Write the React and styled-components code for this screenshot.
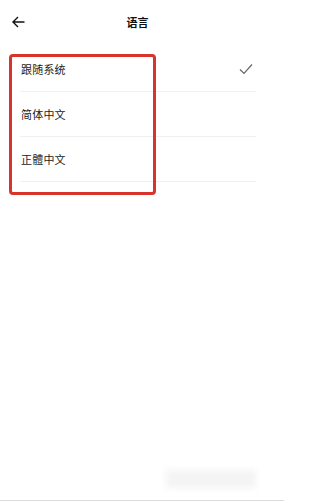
import React from "react";
import styled, { createGlobalStyle } from "styled-components";

const Global = createGlobalStyle`
  html, body { margin: 0; padding: 0; background: #fff; }
  body { font-family: "Noto Sans CJK SC", "Noto Sans", sans-serif; }
`;

const Page = styled.div`
  position: relative;
  width: 284px;
  height: 501px;
  background: #fff;
  overflow: hidden;
  box-sizing: border-box;
  border-bottom: 1px solid #dcdcdc;
`;

const Header = styled.div`
  height: 44px;
  padding: 0 12px 3px 12px;
  display: flex;
  align-items: center;
`;

const BackButton = styled.button`
  width: 13px;
  height: 12px;
  padding: 0;
  border: 0;
  background: transparent;
  display: flex;
  align-items: center;
  justify-content: center;
`;

const Title = styled.div`
  flex: 1;
  text-align: center;
  margin-right: 22px;
  font-size: 11px;
  font-weight: 700;
  color: #111;
`;

const List = styled.div`
  margin: 0 28px 0 20px;
`;

const Row = styled.div`
  height: 44px;
  display: flex;
  align-items: center;
  justify-content: space-between;
  border-bottom: 1px solid #f0f0f0;
`;

const Label = styled.span`
  font-size: 11px;
  color: #222;
  letter-spacing: 0.2px;
  margin-left: 1px;
`;

const Check = styled.svg`
  width: 14px;
  height: 12px;
  margin-right: 3px;
`;

const Highlight = styled.div`
  position: absolute;
  left: 9px;
  top: 54px;
  width: 147px;
  height: 141px;
  box-sizing: border-box;
  border: 3px solid #d8342c;
  border-radius: 4px;
  pointer-events: none;
`;

const Watermark = styled.div`
  position: absolute;
  left: 166px;
  top: 470px;
  width: 90px;
  height: 18px;
  background: #f4f4f4;
  filter: blur(3px);
`;

const items = [
  { label: "跟随系统", selected: true },
  { label: "简体中文" },
  { label: "正體中文" },
];

export default function App() {
  return (
    <Page>
      <Global />
      <Header>
        <BackButton aria-label="返回">
          <svg width="13" height="12" viewBox="0 0 13 12" fill="none">
            <path d="M12.5 6H1M6 1L1 6l5 5" stroke="#111" strokeWidth="1.4" />
          </svg>
        </BackButton>
        <Title>语言</Title>
      </Header>
      <List>
        {items.map((it) => (
          <Row key={it.label}>
            <Label>{it.label}</Label>
            {it.selected && (
              <Check viewBox="0 0 14 12" fill="none">
                <path d="M1 6.5l4 4L13 1.5" stroke="#666" strokeWidth="1.2" />
              </Check>
            )}
          </Row>
        ))}
      </List>
      <Highlight />
      <Watermark />
    </Page>
  );
}
